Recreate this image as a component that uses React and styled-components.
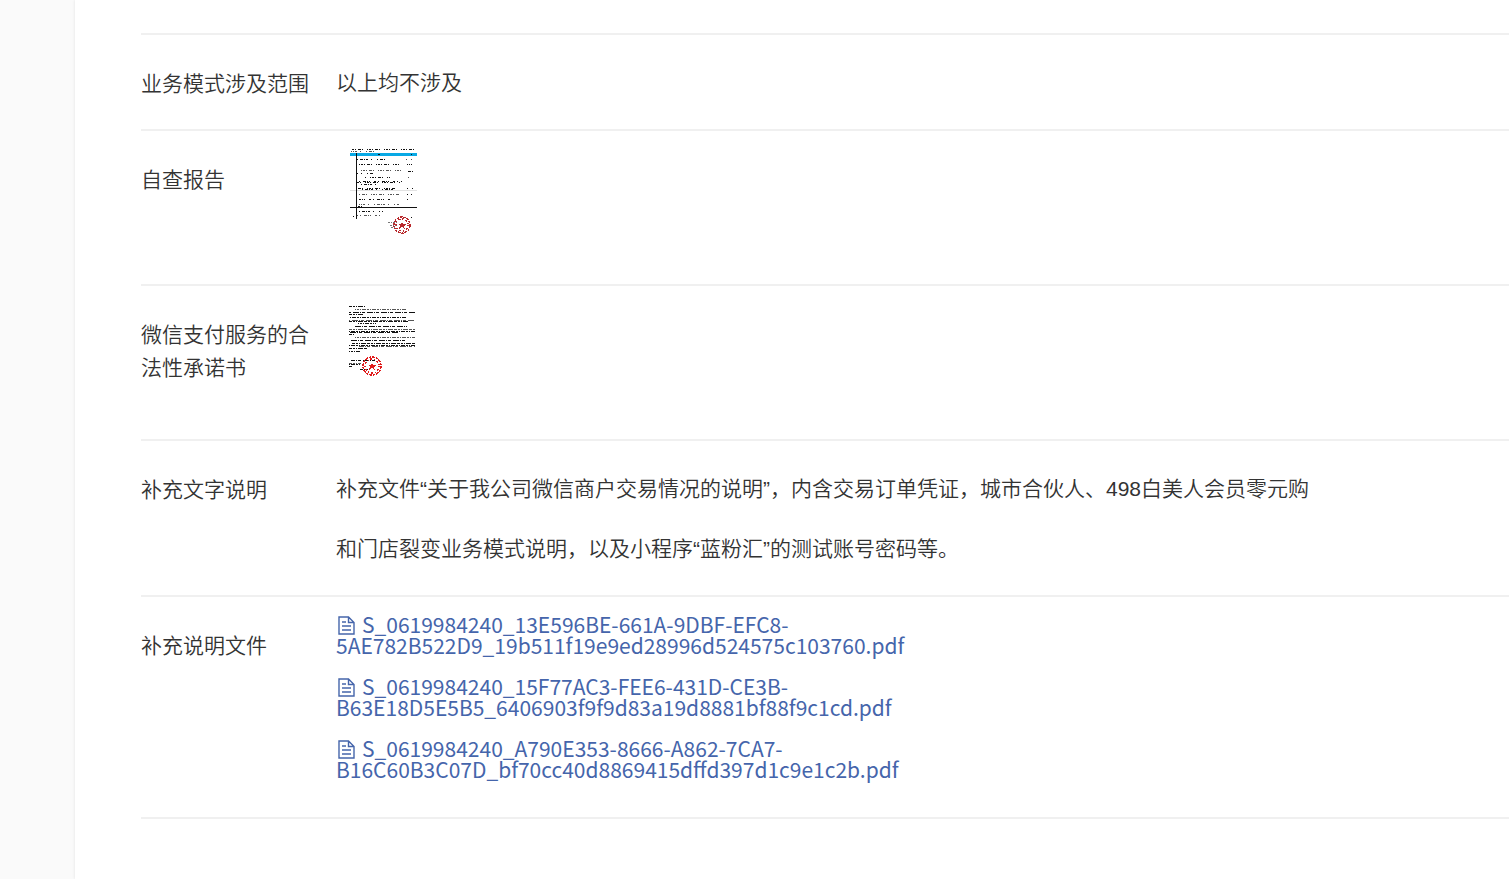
import React from 'react';
import styled, { createGlobalStyle } from 'styled-components';

const GlobalStyle = createGlobalStyle`
  * { box-sizing: border-box; }
  body {
    margin: 0;
    background: #fafafa;
    color: #333;
    font-family: "Liberation Sans", "Noto Sans CJK SC", sans-serif;
    font-size: 21px;
    font-weight: 350;
  }
`;

const Page = styled.div`
  min-height: 100vh;
  padding-left: 75px;
  overflow-x: hidden;
`;

const Panel = styled.main`
  min-height: 100vh;
  padding: 33px 0 60px 66px;
  background: #fff;
  box-shadow: 0 0 3px rgba(0, 0, 0, 0.1);
`;

const Details = styled.dl`
  margin: 0;
  border-top: 2px solid #f0f0f0;
`;

const Row = styled.div`
  display: flex;
  align-items: flex-start;
  min-height: ${(p) => p.$height || 96}px;
  border-bottom: 2px solid #f0f0f0;
`;

const Label = styled.dt`
  flex: none;
  width: 171px;
  margin-right: 24px;
  padding-top: 32px;
  line-height: 33px;
`;

const Value = styled.dd`
  flex: 1;
  min-width: 0;
  margin: 0;
  padding-top: ${(p) => (p.$files ? 17 : 18)}px;
`;

const Statement = styled.p`
  max-width: 984px;
  margin: 0;
  line-height: 60px;
`;

const ThumbButton = styled.button`
  display: block;
  padding: 0 12px;
  border: 0;
  background: none;
  cursor: pointer;

  svg { display: block; }
`;

const FileList = styled.ul`
  width: 600px;
  max-width: 100%;
  margin: 0;
  padding: 0;
  list-style: none;
`;

const FileItem = styled.li`
  margin-bottom: 20px;
  font-family: "Noto Sans CJK SC", sans-serif;
  font-weight: 400;
  line-height: 21px;
`;

const FileLink = styled.a`
  color: #4565ab;
  text-decoration: none;

  svg {
    margin-right: 7px;
    margin-left: 2px;
    vertical-align: -2px;
  }
`;

const files = [
  ['S_0619984240_13E596BE-661A-9DBF-EFC8-', '5AE782B522D9_19b511f19e9ed28996d524575c103760.pdf'],
  ['S_0619984240_15F77AC3-FEE6-431D-CE3B-', 'B63E18D5E5B5_6406903f9f9d83a19d8881bf88f9c1cd.pdf'],
  ['S_0619984240_A790E353-8666-A862-7CA7-', 'B16C60B3C07D_bf70cc40d8869415dffd397d1c9e1c2b.pdf'],
];

// Each entry: x, y, width of one row of scanned writing.
const reportLines = [
  [2, 0, 65], [1, 2, 23], [27, 5, 5], [61, 5, 2],
  [7, 10, 28], [56, 10, 6], [7, 15, 42], [7, 18, 4], [57, 15, 5],
  [7, 21, 44], [7, 24, 17], [56, 22, 7], [14, 28, 26], [58, 28, 2],
  [7, 32, 45], [7, 33, 44], [11, 35, 15], [57, 34, 2], [7, 39, 38], [7, 40, 38], [56, 39, 7],
  [9, 45, 40], [57, 45, 5], [9, 50, 32], [57, 50, 2], [9, 55, 40],
  [59, 56, 2], [7, 57, 6], [9, 62, 24], [7, 66, 26], [2, 67, 3], [56, 68, 7],
];

const letterLines = [
  [0, 2, 16], [6, 5, 52], [0, 8, 66], [0, 10, 14], [1, 13, 56],
  [0, 16, 66], [0, 17, 60], [9, 19, 18], [4, 22, 54], [0, 25, 66], [0, 27, 66],
  [0, 28, 50], [0, 30, 5], [6, 33, 60], [2, 36, 54], [3, 39, 63], [0, 41, 66],
  [10, 42, 56], [0, 44, 18], [0, 47, 12], [2, 56, 25], [0, 59, 12], [0, 60, 11],
  [0, 62, 3], [11, 65, 9],
];

const dashes = [
  '2 1 1 2 3 1 1 4 1 1',
  '1 2 3 1 1 1 2 3 1 5',
  '3 1 1 1 1 4 2 2 1 3',
];

const denseDashes = ['3 1 2 1 1 1 5 1', '1 1 4 1 2 1', '6 1 1 1 3 2'];

function Ink({ lines, dense }) {
  const patterns = dense ? denseDashes : dashes;
  return lines.map(([x, y, w], i) => (
    <path
      key={i}
      d={`M${x} ${y + 0.5}h${w}`}
      stroke={i % 4 === 1 ? '#555' : '#111'}
      strokeDasharray={patterns[i % 3]}
      strokeDashoffset={i * 5}
    />
  ));
}

function Seal({ cx, cy, r, color }) {
  return (
    <g fill="none" stroke={color}>
      <circle cx={cx} cy={cy} r={r} strokeWidth="1.4" strokeDasharray="3 1 2 1" />
      <circle cx={cx} cy={cy} r={r - 2} strokeWidth="1.4" strokeDasharray="1 2 2 2" />
      <path fill={color} stroke="none" d={`M${cx} ${cy - 3}l1 2h3l-2 2 1 3-3-2-3 2 1-3-2-2h3z`} />
    </g>
  );
}

function ReportImage() {
  return (
    <svg width="70" height="86" viewBox="-2 0 70 86" fill="none" shapeRendering="crispEdges" role="img" aria-label="自查报告">
      <path fill="#08a9e5" d="M0 4h67v3H0z" />
      <Ink lines={reportLines} />
      <path stroke="#e2e2e2" d="M0 41.5h67" />
      <path stroke="#111" d="M6.5 4v66M0 58.5h67" />
      <Seal cx={52} cy={76} r={8} color="#b9292c" />
      <path stroke="#777" strokeDasharray="2 1 1 1" d="M38 73.500h10M40 76.500h6M41 78.500h5" />
    </svg>
  );
}

function LetterImage() {
  return (
    <svg width="70" height="74" viewBox="-1 0 70 74" fill="none" shapeRendering="crispEdges" role="img" aria-label="微信支付服务的合法性承诺书">
      <Ink lines={letterLines} dense />
      <Seal cx={23} cy={62} r={9} color="#e01c1c" />
    </svg>
  );
}

function FileIcon() {
  return (
    <svg width="17" height="19" viewBox="0 0 17 19" fill="none" stroke="currentColor" strokeWidth="1.4" aria-hidden="true">
      <path d="M1 1h9.500l5.500 5.500V18H1z M10.500 1v5.500H16 M4 6h4M4 10h9M4 14h9" />
    </svg>
  );
}

export default function App() {
  return (
    <>
      <GlobalStyle />
      <Page>
        <Panel>
          <Details>
            <Row>
              <Label>业务模式涉及范围</Label>
              <Value><Statement>以上均不涉及</Statement></Value>
            </Row>
            <Row $height={155}>
              <Label>自查报告</Label>
              <Value><ThumbButton type="button"><ReportImage /></ThumbButton></Value>
            </Row>
            <Row $height={155}>
              <Label>微信支付服务的合法性承诺书</Label>
              <Value><ThumbButton type="button"><LetterImage /></ThumbButton></Value>
            </Row>
            <Row $height={156}>
              <Label>补充文字说明</Label>
              <Value>
                <Statement>
                  补充文件“关于我公司微信商户交易情况的说明”，内含交易订单凭证，城市合伙人、498白美人会员零元购和门店裂变业务模式说明，以及小程序“蓝粉汇”的测试账号密码等。
                </Statement>
              </Value>
            </Row>
            <Row $height={222}>
              <Label>补充说明文件</Label>
              <Value $files>
                <FileList>
                  {files.map(([head, tail]) => (
                    <FileItem key={tail}>
                      <FileLink href="#"><FileIcon />{head}<br />{tail}</FileLink>
                    </FileItem>
                  ))}
                </FileList>
              </Value>
            </Row>
          </Details>
        </Panel>
      </Page>
    </>
  );
}
